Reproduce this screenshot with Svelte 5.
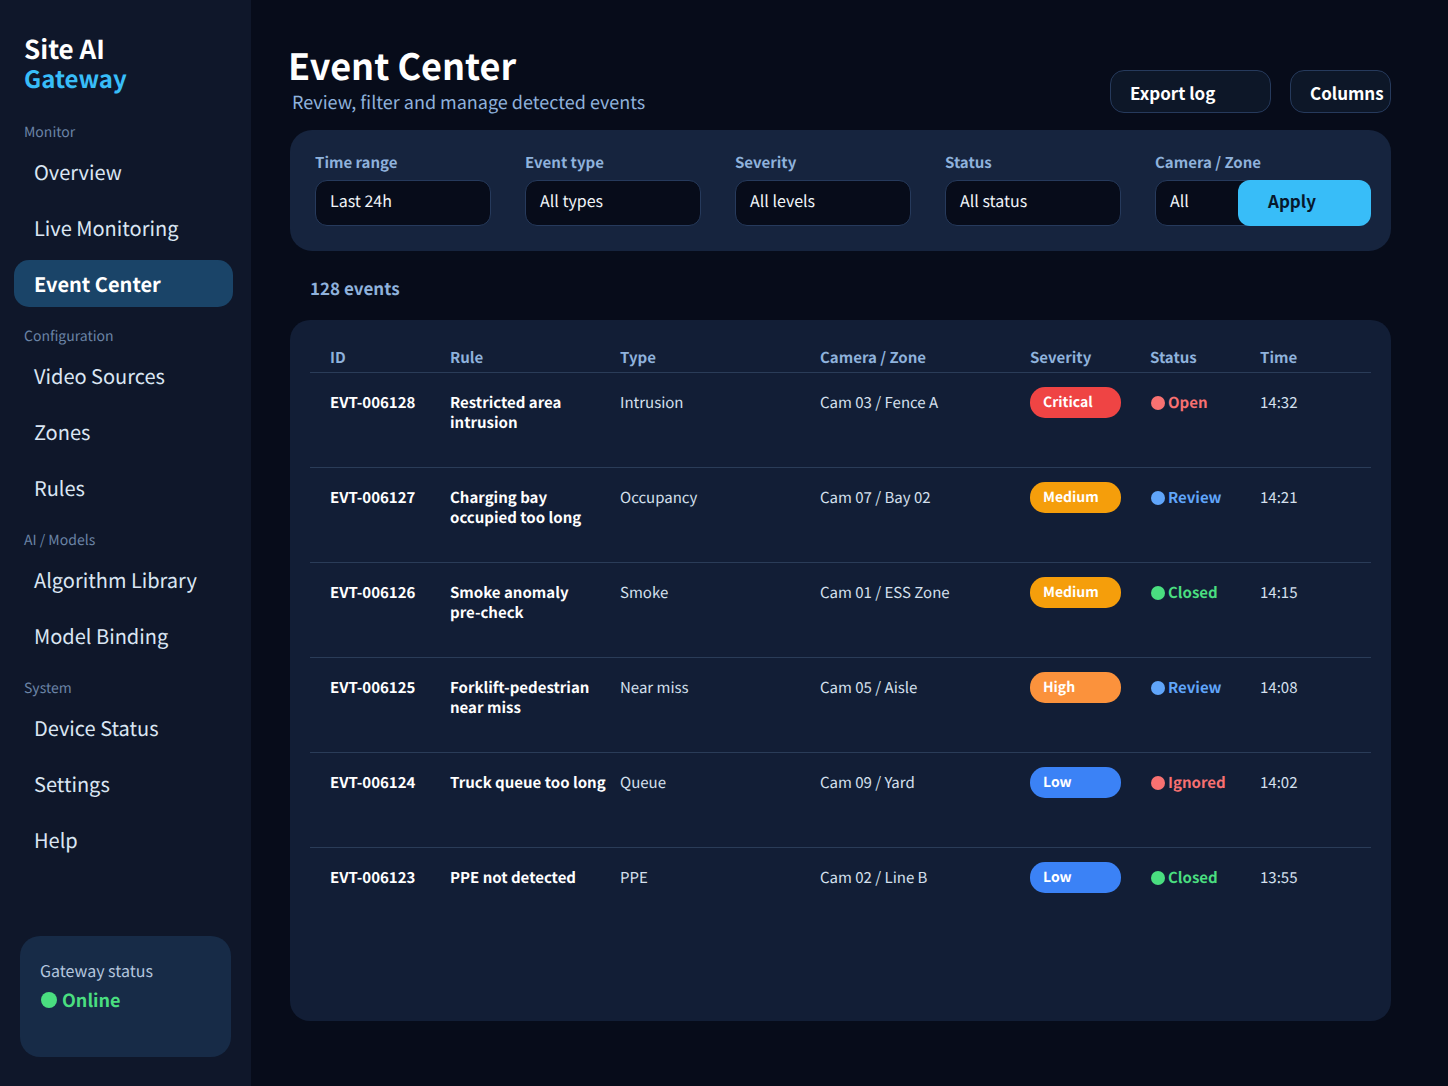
<script>
  const nav = [
    { label: "Monitor", items: ["Overview", "Live Monitoring", "Event Center"] },
    { label: "Configuration", items: ["Video Sources", "Zones", "Rules"] },
    { label: "AI / Models", items: ["Algorithm Library", "Model Binding"] },
    { label: "System", items: ["Device Status", "Settings", "Help"] },
  ];
  const filters = [
    ["Time range", "Last 24h"],
    ["Event type", "All types"],
    ["Severity", "All levels"],
    ["Status", "All status"],
  ];
  const events = [
    { id: "EVT-006128", rule: "Restricted area\nintrusion", type: "Intrusion", cam: "Cam 03 / Fence A", sev: "Critical", status: "Open", time: "14:32" },
    { id: "EVT-006127", rule: "Charging bay\noccupied too long", type: "Occupancy", cam: "Cam 07 / Bay 02", sev: "Medium", status: "Review", time: "14:21" },
    { id: "EVT-006126", rule: "Smoke anomaly\npre-check", type: "Smoke", cam: "Cam 01 / ESS Zone", sev: "Medium", status: "Closed", time: "14:15" },
    { id: "EVT-006125", rule: "Forklift-pedestrian\nnear miss", type: "Near miss", cam: "Cam 05 / Aisle", sev: "High", status: "Review", time: "14:08" },
    { id: "EVT-006124", rule: "Truck queue too long", type: "Queue", cam: "Cam 09 / Yard", sev: "Low", status: "Ignored", time: "14:02" },
    { id: "EVT-006123", rule: "PPE not detected", type: "PPE", cam: "Cam 02 / Line B", sev: "Low", status: "Closed", time: "13:55" },
  ];
</script>

<div class="page">
  <aside class="side">
    <div class="logo">Site AI<span>Gateway</span></div>
    {#each nav as sec}
      <div class="sec">{sec.label}</div>
      <div class="items">
        {#each sec.items as it}
          <div class="item" class:active={it === "Event Center"}>{it}</div>
        {/each}
      </div>
    {/each}
    <div class="gw">
      <div class="gw-l">Gateway status</div>
      <div class="gw-s"><i></i>Online</div>
    </div>
  </aside>

  <main class="main">
    <header class="head">
      <div class="ttl">
        <h1>Event Center</h1>
        <p>Review, filter and manage detected events</p>
      </div>
      <button class="btn export">Export log</button>
      <button class="btn cols">Columns</button>
    </header>

    <section class="filters">
      {#each filters as f}
        <div class="f">
          <div class="f-l">{f[0]}</div>
          <div class="f-v">{f[1]}</div>
        </div>
      {/each}
      <div class="f last">
        <div class="f-l">Camera / Zone</div>
        <div class="f-row">
          <div class="f-v">All</div>
          <button class="apply">Apply</button>
        </div>
      </div>
    </section>

    <div class="count">128 events</div>

    <section class="table">
      <div class="row th">
        <div>ID</div><div>Rule</div><div>Type</div><div>Camera / Zone</div><div>Severity</div><div>Status</div><div>Time</div>
      </div>
      {#each events as e}
        <div class="row td">
          <div class="id">{e.id}</div>
          <div class="rule">{e.rule}</div>
          <div>{e.type}</div>
          <div>{e.cam}</div>
          <div><span class="pill {e.sev.toLowerCase()}">{e.sev}</span></div>
          <div class="st {e.status.toLowerCase()}"><i></i>{e.status}</div>
          <div>{e.time}</div>
        </div>
      {/each}
    </section>
  </main>
</div>

<style>
:global(body){margin:0;background:#070c1a}
.page{
  width:1448px;height:1086px;display:flex;overflow:hidden;
  background:#070c1a;color:#fff;text-rendering:geometricPrecision;
  font-family:"Noto Sans CJK SC","Noto Sans CJK JP","Noto Sans",sans-serif;
}
.side{
  width:251px;flex:none;box-sizing:border-box;background:#0f172a;
  padding:34px 18px 29px 14px;display:flex;flex-direction:column;
}
.logo{font-size:26px;line-height:30px;font-weight:700;padding-left:10px;margin-bottom:27px}
.logo span{display:block;font-size:24px;margin-top:-1px;color:#38bdf8}
.sec{font-size:14px;line-height:24px;color:#6b84a6;padding-left:10px}
.items{display:flex;flex-direction:column;gap:9px;margin:4px 0 17px}
.item{height:47px;line-height:47px;font-size:20px;padding-left:20px;border-radius:15px;color:#dbe6f3}
.item.active{background:#1a4468;color:#fff;font-weight:700}
.gw{
  margin:auto 2px 0 6px;height:121px;box-sizing:border-box;padding:22px 20px;
  background:#172b47;border-radius:20px;
}
.gw-l{font-size:16px;line-height:24px;color:#b4c6de}
.gw-s{display:flex;align-items:center;gap:5px;font-size:18px;line-height:28px;font-weight:700;color:#4ade80;margin-top:4px}
.gw-s i{width:16px;height:16px;border-radius:50%;background:#4ade80;margin:0 0 0 1px}

.main{flex:1;padding:0 57px 0 38px;display:flex;flex-direction:column}
.head{display:flex;align-items:flex-start;height:130px;box-sizing:border-box}
.ttl{flex:1;padding-top:40px}
h1{margin:0 0 1px -1px;font-size:36px;line-height:50px;font-weight:700}
.ttl p{margin:0 0 0 3px;font-size:18px;line-height:22px;color:#8fb2dc}
.btn{
  margin-top:70px;height:43px;box-sizing:border-box;text-align:left;padding:2px 0 0 19px;
  background:#0d1728;border:1px solid #263a5c;border-radius:14px;
  color:#fff;font:700 17px "Noto Sans CJK SC",sans-serif;
}
.export{width:161px;margin-right:19px}
.cols{width:101px}

.filters{
  margin-left:1px;height:121px;box-sizing:border-box;padding:21px 20px 0 25px;
  background:#16243e;border-radius:22px;display:grid;
  grid-template-columns:repeat(4,176px) 216px;column-gap:34px;
}
.f-l{font-size:15px;line-height:24px;font-weight:700;color:#8fb2dc;margin-bottom:5px}
.f-v{
  width:176px;height:46px;line-height:38px;box-sizing:border-box;padding-left:14px;flex:none;
  background:#070c1a;border:1px solid #263a5c;border-radius:12px;font-size:16px;color:#f1f5f9;
}
.f-row{display:flex}
.apply{
  width:133px;height:46px;flex:none;margin-left:-93px;box-sizing:border-box;border:0;text-align:left;padding:0 0 5px 30px;
  background:#38bdf8;border-radius:12px;color:#07182c;font:700 17px "Noto Sans CJK SC",sans-serif;
}

.count{margin:24px 0 19px 21px;font-size:17px;line-height:26px;font-weight:700;color:#8fb2dc}

.table{
  margin-left:1px;height:701px;box-sizing:border-box;padding:24px 20px 0;
  background:#121e36;border-radius:20px;
}
.row{
  display:grid;grid-template-columns:120px 170px 200px 210px 120px 110px 1fr;
  padding-left:20px;border-bottom:1px solid #2a3c58;font-size:15px;
}
.th{height:28px;line-height:28px;font-weight:700;color:#8fb2dc}
.td{height:95px;box-sizing:border-box;padding-top:19px;line-height:22px;color:#d5e0ee}
.td:last-child{border-bottom:0}
.id,.rule{font-weight:700;color:#fff}
.rule{line-height:20px;padding-top:1px;white-space:pre-line}
.pill{
  display:block;width:91px;height:31px;line-height:30px;box-sizing:border-box;padding-left:13px;
  margin-top:-5px;border-radius:15px;font-size:14px;font-weight:700;color:#fff;
}
.critical{background:#ef4444}
.medium{background:#f59e0b}
.high{background:#fb923c}
.low{background:#3b82f6}
.st{display:flex;align-items:flex-start;gap:3px;font-weight:700}
.st i{width:14px;height:14px;border-radius:50%;background:currentColor;margin:4px 0 0 1px}
.open,.ignored{color:#f87171}
.review{color:#60a5fa}
.closed{color:#4ade80}
</style>
